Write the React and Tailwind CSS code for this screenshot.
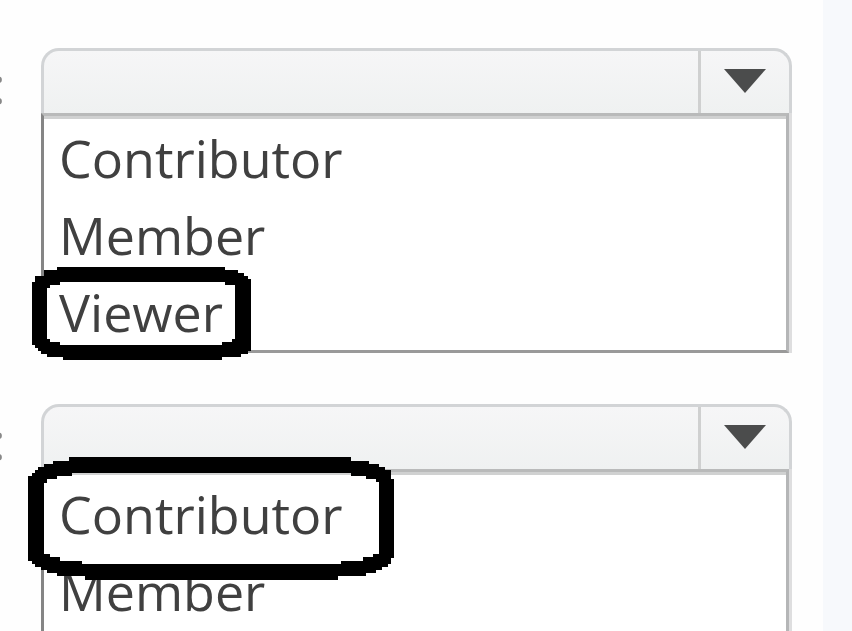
import React from "react";

function AnswerOutline({ className, viewBox, d }) {
  return (
    <svg className={className} viewBox={viewBox} aria-hidden="true">
      <path d={d} fill="#000" fillRule="evenodd" shapeRendering="crispEdges" />
    </svg>
  );
}

function DropDown({ id, options, children }) {
  return (
    <section className="flex">
      <label htmlFor={id} className="-ml-2 h-[71px] w-[49px] shrink-0 text-[52px] leading-[71px] text-[#888]">
        :
      </label>
      <div className="relative min-w-0 flex-1">
        <div className="flex h-[65px] overflow-hidden rounded-t-[18px] border-x-[3px] border-t-[3px] border-[#d2d4d6] bg-linear-to-b from-[#f6f6f7] to-[#eff1f1]">
          <select id={id} defaultValue="" className="h-full min-w-0 flex-1 appearance-none bg-transparent pl-4 text-transparent outline-none">
            <option value=""></option>
            {options.map((option) => (
              <option key={option}>{option}</option>
            ))}
          </select>
          <div className="pointer-events-none flex w-[91px] shrink-0 justify-center border-l-[3px] border-[#cfd0d0] pt-[18px]">
            <svg width="42" height="24" viewBox="0 0 42 24" aria-hidden="true">
              <path d="M0 0H42L21 24Z" fill="#4b4c4c" />
            </svg>
          </div>
        </div>
        <ul className="mr-[3px] border-[3px] border-t-[#b9baba] border-r-[#b5b6b7] border-b-[#999] border-l-[#858585] bg-white shadow-[3px_0_0_#dededf]">
          {options.map((option) => (
            <li key={option} className="h-[77px] pl-[15px] text-[52px] leading-[78px] text-[#404040] first:h-[80px] first:border-t-[3px] first:border-[#d0d1d1]">
              {option}
            </li>
          ))}
        </ul>
        {children}
      </div>
    </section>
  );
}

export default function App() {
  const roles = ["Contributor", "Member", "Viewer"];
  return (
    <div className="flex h-screen overflow-hidden bg-[#f7f9fc] font-['Open_Sans','Noto_Sans',sans-serif]">
      <main className="flex min-w-0 flex-1 flex-col gap-[51px] bg-[#fefefe] pt-12 pr-[31px]">
        <DropDown id="first-role" options={roles}>
          <AnswerOutline
            className="absolute top-[219px] left-[-9px] h-[93px] w-[219px]"
            viewBox="32 267 219 93"
            d="M57 267H225V270H238V273H244V276H248V279H251V351H248V354H241V357H222V360H63V357H47V354H41V351H38V348H35V345H32V282H35V276H44V270H57Z M60 282V285H50V288H47V339H50V342H60V345H222V342H232V339H235V285H225V282Z"
          />
        </DropDown>
        <DropDown id="second-role" options={roles}>
          <AnswerOutline
            className="absolute top-[53px] left-[-13px] h-[123px] w-[366px]"
            viewBox="28 457 366 123"
            d="M69 457H351V461H369V464H379V467H385V470H391V479H394V558H391V564H388V567H382V570H376V573H366V576H338V580H85V576H57V573H47V570H41V567H35V564H32V561H28V476H32V473H35V470H38V467H44V464H53V461H69Z M72 473V476H57V479H47V483H44V554H50V557H60V561H82V564H341V561H363V557H373V554H379V482H376V479H366V476H351V473Z"
          />
        </DropDown>
      </main>
      <aside className="w-[29px] shrink-0" />
    </div>
  );
}
